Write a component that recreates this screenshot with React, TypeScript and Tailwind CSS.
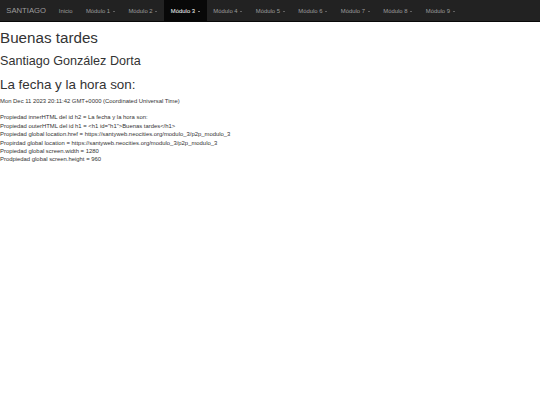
import React from "react";

const modules = [1, 2, 3, 4, 5, 6, 7, 8, 9];

function Caret() {
  return (
    <span className="ml-[1px] inline-block h-0 w-0 border-x-[1.8px] border-t-[1.8px] border-x-transparent border-t-current align-middle" />
  );
}

function Navbar() {
  return (
    <nav className="flex h-[22px] items-stretch border-b border-[#080808] bg-[#222222]">
      <a className="flex items-center px-[6.3px] pt-[1px] text-[7.7px] leading-[8.4px] text-[#9d9d9d]">SANTIAGO</a>
      <ul className="flex items-stretch">
        <li className="flex items-center px-[6.5px] pt-[1px] text-[5.9px] text-[#9d9d9d]">Inicio</li>
        {modules.map((n) => (
          <li
            key={n}
            className={`flex items-center px-[6.8px] pt-[1px] text-[5.9px] ${
              n === 3 ? "bg-[#080808] text-white" : "text-[#9d9d9d]"
            }`}
          >
            Módulo {n}&nbsp;
            <Caret />
          </li>
        ))}
      </ul>
    </nav>
  );
}

export default function App() {
  const lines = [
    'Propiedad innerHTML del id h2 = La fecha y la hora son:',
    'Propiedad outerHTML del id h1 = <h1 id="h1">Buenas tardes</h1>',
    "Propiedad global location.href = https://santyweb.neocities.org/modulo_3/p2p_modulo_3",
    "Propirdad global location = https://santyweb.neocities.org/modulo_3/p2p_modulo_3",
    "Propiedad global screen.width = 1280",
    "Prodpiedad global screen.height = 960",
  ];

  return (
    <div className="min-h-[405px] bg-white font-['Liberation_Sans',Arial,sans-serif] text-[#333333]">
      <Navbar />
      <h1 className="mt-[8.4px] mb-[4.2px] text-[15.2px] leading-[16.6px]">Buenas tardes</h1>
      <h2 className="mt-[8.4px] mb-[4.2px] text-[12.6px] leading-[13.9px]">Santiago González Dorta</h2>
      <h2 className="mt-[8.4px] mb-[4.2px] text-[13.4px] leading-[14.7px]">La fecha y la hora son:</h2>
      <div className="text-[5.9px] leading-[8.4px]">
        <p>Mon Dec 11 2023 20:11:42 GMT+0000 (Coordinated Universal Time)</p>
        <br />
        {lines.map((l) => (
          <p key={l}>{l}</p>
        ))}
      </div>
    </div>
  );
}
